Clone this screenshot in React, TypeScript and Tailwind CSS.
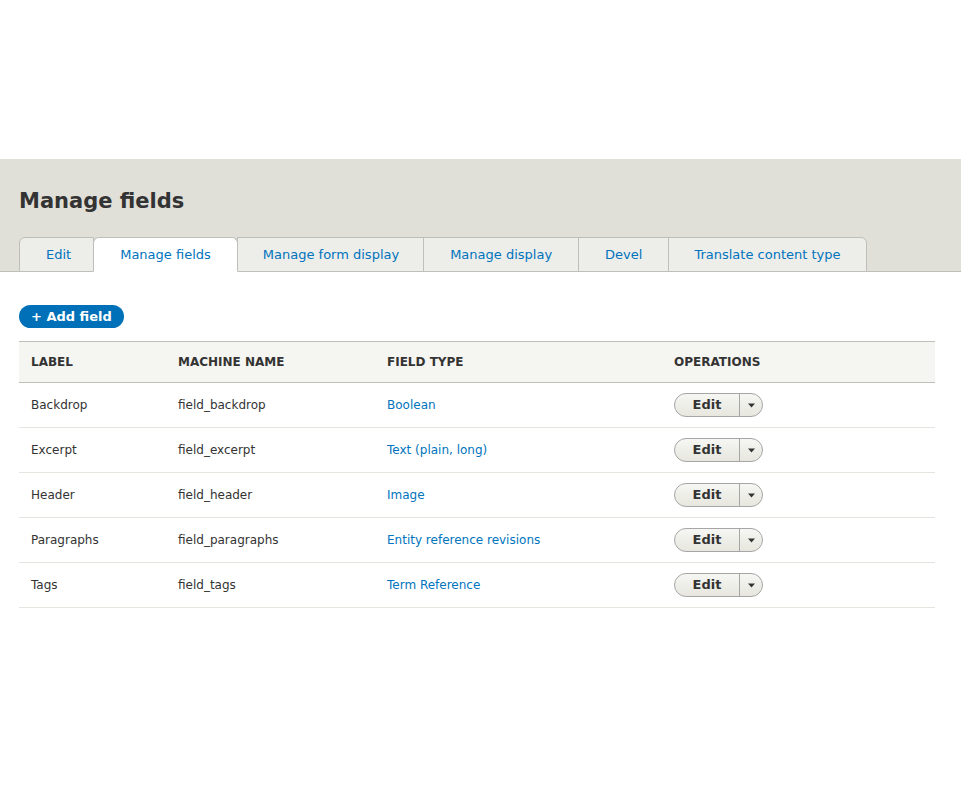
const tabs = [
  { label: 'Edit' },
  { label: 'Manage fields', active: true },
  { label: 'Manage form display' },
  { label: 'Manage display' },
  { label: 'Devel' },
  { label: 'Translate content type' },
];

const fields = [
  { label: 'Backdrop', machine: 'field_backdrop', type: 'Boolean' },
  { label: 'Excerpt', machine: 'field_excerpt', type: 'Text (plain, long)' },
  { label: 'Header', machine: 'field_header', type: 'Image' },
  { label: 'Paragraphs', machine: 'field_paragraphs', type: 'Entity reference revisions' },
  { label: 'Tags', machine: 'field_tags', type: 'Term Reference' },
];

function DropButton() {
  return (
    <div className="inline-flex h-[24px] items-stretch rounded-full border border-[#a6a6a6] bg-gradient-to-b from-[#f6f6f3] to-[#e7e7df] text-[13px] text-[#333]">
      <span className="flex w-[64px] items-center justify-center font-bold">Edit</span>
      <span className="flex w-[23px] items-center justify-center border-l border-[#a6a6a6]">
        <svg width="9" height="5" viewBox="0 0 9 5">
          <path d="M1 0.5h7L4.5 4.5z" fill="#333" />
        </svg>
      </span>
    </div>
  );
}

export default function App() {
  return (
    <div className="min-h-[789px] bg-white text-[13px] text-[#333]" style={{ fontFamily: '"DejaVu Sans", sans-serif' }}>
      <div className="h-[159px]" />
      <div className="border-b border-[#bfbfba] bg-[#e0e0d8] px-[19px]">
        <h1 className="pt-[29px] text-[21px] font-bold leading-[26px] text-[#333]">Manage fields</h1>
        <ul className="mt-[23px] flex">
          {tabs.map((t, i) => (
            <li
              key={t.label}
              className={
                'relative -mb-px flex h-[35px] items-center border border-[#bfbfba] text-[#0074bd] ' +
                (i === 0 ? 'pl-[26px] pr-[22px] ' : i === 2 ? 'pl-[25px] pr-[24px] ' : i === 5 ? 'px-[25px] ' : 'px-[26px] ') +
                (i > 0 ? '-ml-px ' : '') +
                (i === 0 ? 'rounded-tl-[6px] ' : '') +
                (i === tabs.length - 1 ? 'rounded-tr-[6px] ' : '') +
                (t.active ? 'z-10 rounded-t-[6px] border-b-white bg-white' : 'bg-[#ededea]')
              }
            >
              {t.label}
            </li>
          ))}
        </ul>
      </div>

      <div className="pl-[19px] pr-[26px] pt-[33px]">
        <button className="h-[23px] rounded-full bg-[#0071b8] px-[12px] text-[13px] font-bold text-white">
          + Add field
        </button>

        <table className="mt-[13px] w-full border-collapse text-[12px]">
          <thead>
            <tr className="h-[41px] border-y border-[#bfbfba] bg-[#f5f5f2] text-left font-bold uppercase">
              <th className="w-[147px] px-[12px]">Label</th>
              <th className="w-[209px] px-[12px]">Machine name</th>
              <th className="w-[287px] px-[12px]">Field type</th>
              <th className="px-[12px]">Operations</th>
            </tr>
          </thead>
          <tbody>
            {fields.map((f) => (
              <tr key={f.machine} className="h-[45px] border-b border-[#e6e4df]">
                <td className="px-[12px]">{f.label}</td>
                <td className="px-[12px]">{f.machine}</td>
                <td className="px-[12px] text-[#0074bd]">{f.type}</td>
                <td className="px-[12px]">
                  <DropButton />
                </td>
              </tr>
            ))}
          </tbody>
        </table>
      </div>
    </div>
  );
}
